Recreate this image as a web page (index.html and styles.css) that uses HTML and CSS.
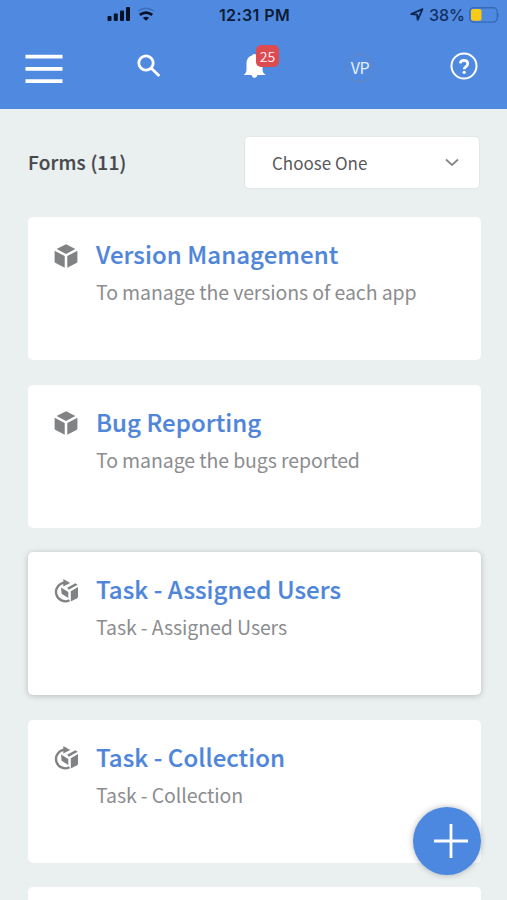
FILE: index.html
```html
<!DOCTYPE html>
<html lang="en">
<head>
<meta charset="utf-8">
<meta name="viewport" content="width=device-width, initial-scale=1">
<title>Forms</title>
<link rel="stylesheet" href="styles.css">
</head>
<body>
<svg class="defs" width="0" height="0">
  <symbol id="cube" viewBox="0 0 24 24">
    <path d="M12 .3 21.400 5 12 9.900 2.600 5z"/>
    <path d="M.6 6.700 10.700 12v11.700L1.600 19Q.6 18.500.6 17.500z"/>
    <path d="M23.400 6.700 13.300 12v11.700L22.400 19q1-.5 1-1.500z"/>
  </symbol>
  <symbol id="task" viewBox="0 0 24 24">
    <path class="arc" d="M11 3.700A9.300 9.300 0 1 0 15.500 21.300"/>
    <path d="M9.300 0 16.200 4 9.300 7.500z"/>
    <path d="M13.200 8.800 21.300 4.200 23.700 5.800 14.800 10.800z"/>
    <path d="M7 8.500 14.300 13v6L7.600 14.800z"/>
    <path d="M24 8 16.800 12.300V22.400l6.200-3.200q1-.6 1-1.700z"/>
  </symbol>
</svg>
<header class="header">
  <div class="status">
    <div class="signal">
      <svg width="24" height="15" viewBox="0 0 24 15"><rect x=".5" y="9" width="4" height="5" rx="1"/><rect x="6.800" y="6.500" width="4" height="7.500" rx="1"/><rect x="13" y="3.500" width="4" height="10.500" rx="1"/><rect x="19" y="0" width="4" height="14" rx="1"/></svg>
      <svg width="18" height="14" viewBox="0 0 18 14"><path class="wifi-dim" d="M1 4Q9-1.500 17 4"/><path class="wifi" d="M2.800 7.900Q9 3.400 15.200 7.900"/><path d="M5.800 10.800Q9 8.600 12.200 10.800L9 13.800z"/></svg>
    </div>
    <time class="clock">12:31 PM</time>
    <div class="power">
      <svg class="location" width="14" height="13" viewBox="0 0 14 13"><path d="M1.200 6 12.500 1.200 7.700 11.800 7 6.600z"/></svg>
      <span class="percent">38%</span>
      <svg width="31" height="16" viewBox="0 0 31 16"><rect class="cell" x=".7" y=".7" width="27.600" height="14.400" rx="4"/><rect class="charge" x="2" y="2" width="10.500" height="11.800" rx="2"/><path class="tip" d="M29.400 5.500q1.600 2.500 0 5z"/></svg>
    </div>
  </div>
  <nav class="toolbar">
    <button class="tool menu" aria-label="Menu"><svg width="38" height="30" viewBox="0 0 38 30"><path d="M.5 2.600h37M.5 14.900h37M.5 27.200h37"/></svg></button>
    <button class="tool search" aria-label="Search"><svg width="24" height="24" viewBox="0 0 24 24"><circle cx="9" cy="9" r="7.200"/><path d="m14.300 14.300 8 7.700"/></svg></button>
    <button class="tool bell" aria-label="Notifications"><svg width="24" height="25" viewBox="0 0 24 25"><path d="M11 0Q13.500 0 14 1.500 19.500 3 19.500 9.500v6q0 3.500 3.500 5.500H14.500Q13.700 24 11.500 24T8.500 21H.5Q3.500 19 3.500 15.500v-6Q3.500 3 9 1.500 9.300 0 11 0z"/></svg><span class="badge">25</span></button>
    <button class="tool avatar">VP</button>
    <button class="tool help" aria-label="Help"><svg width="28" height="28" viewBox="0 0 28 28"><circle cx="14" cy="14" r="12.500"/><path class="mark" d="M10.300 11.300Q10.500 8.300 14 8.300t3.800 3.200q0 1.900-1.900 3.100-1.700 1-1.700 2.600"/><circle class="dot" cx="14.200" cy="20.300" r="1.600"/></svg></button>
  </nav>
</header>
<main class="content">
  <div class="filter">
    <h1 class="heading">Forms (11)</h1>
    <button class="select"><span>Choose One</span><svg width="14" height="9" viewBox="0 0 14 9"><path d="m1 1.500 6 5.500 6-5.500"/></svg></button>
  </div>
  <section class="cards">
    <article class="card"><svg class="icon"><use href="#cube"/></svg><div><h2 class="title">Version Management</h2><p class="desc">To manage the versions of each app</p></div></article>
    <article class="card"><svg class="icon"><use href="#cube"/></svg><div><h2 class="title">Bug Reporting</h2><p class="desc">To manage the bugs reported</p></div></article>
    <article class="card raised"><svg class="icon"><use href="#task"/></svg><div><h2 class="title">Task - Assigned Users</h2><p class="desc">Task - Assigned Users</p></div></article>
    <article class="card"><svg class="icon"><use href="#task"/></svg><div><h2 class="title">Task - Collection</h2><p class="desc">Task - Collection</p></div></article>
    <article class="card partial"></article>
  </section>
</main>
<button class="fab" aria-label="Add"><svg width="34" height="34" viewBox="0 0 34 34"><path d="M17 0v34M0 17h34"/></svg></button>
</body>
</html>
```
FILE: styles.css
```css
* { box-sizing: border-box; }
html, body { height: 100%; }
body {
  margin: 0;
  overflow: hidden;
  background: #eaeff0;
  font-family: "Noto Sans CJK SC", "Noto Sans", sans-serif;
}
button { margin: 0; padding: 0; border: 0; background: none; font: inherit; }
svg { display: block; flex: none; }
.defs { position: absolute; }

.header { height: 108.500px; background: #5089e0; }
.status {
  display: grid;
  grid-template-columns: 180px 1fr 180px;
  align-items: center;
  height: 29px;
  color: #0c1c36;
  fill: #071226;
  font: 600 16px/20px Inter, sans-serif;
}
.signal { display: flex; gap: 6px; padding-left: 107px; }
.wifi { fill: none; stroke: #071226; stroke-width: 2.800; }
.wifi-dim { fill: none; stroke: #3d6db8; stroke-width: 1.300; }
.clock { text-align: center; padding-left: 2px; letter-spacing: 0.400px; }
.power { display: flex; align-items: center; justify-content: flex-end; padding-right: 7px; }
.location { margin-right: 5px; fill: none; stroke: #0c2850; stroke-width: 1.800; stroke-linejoin: round; }
.percent { margin-right: 4px; color: #12305f; font-weight: 500; }
.cell { fill: none; stroke: #356ab8; stroke-width: 1.400; }
.charge { fill: #f8c915; }
.tip { fill: #356ab8; }

.toolbar { display: flex; height: 79.500px; color: #fff; }
.tool { display: flex; flex: none; align-items: flex-start; }
.tool svg { fill: none; stroke: #fff; }
.menu { width: 112px; padding: 25px 0 0 25px; }
.menu svg { stroke-width: 3.800; }
.search { width: 131px; padding: 25px 0 0 25px; }
.search svg { stroke-width: 2.800; }
.bell { position: relative; width: 103px; padding: 25px 0 0 0; }
.bell svg { fill: #fff; stroke: none; }
.badge {
  position: absolute;
  left: 13px;
  top: 16px;
  width: 23px;
  height: 22px;
  border-radius: 5px;
  background: #db4b50;
  color: #ffe5e9;
  font-size: 14px;
  line-height: 22px;
  text-align: center;
}
.avatar {
  width: 28px;
  height: 28px;
  margin-top: 25px;
  border: 1px solid #6785ba;
  border-radius: 50%;
  justify-content: center;
  color: #e5f0ff;
  font-size: 16px;
  line-height: 25px;
  letter-spacing: -0.300px;
}
.help { margin-left: 76px; padding-top: 23px; }
.help svg { stroke-width: 2; }
.help .mark { stroke-width: 2.700; }
.help .dot { fill: #fff; stroke: none; }

.content { padding: 28.500px 26px 0 28px; }
.filter { display: flex; justify-content: space-between; padding-right: 2px; height: 80px; }
.heading {
  margin: 0;
  color: #45494c;
  font-size: 19px;
  font-weight: 500;
  line-height: 50px;
  letter-spacing: 0.200px;
  -webkit-text-stroke: 0.200px;
}
.select {
  display: flex;
  align-items: center;
  justify-content: space-between;
  width: 234px;
  height: 51px;
  padding: 0 20px 0 27px;
  border-radius: 4px;
  background: #fff;
  box-shadow: 0 0 2px rgba(0, 0, 0, 0.120);
  color: #58595b;
  font-size: 17px;
}
.select svg { fill: none; stroke: #85888b; stroke-width: 1.800; }

.cards { display: grid; gap: 24.500px; }
.card {
  display: flex;
  gap: 18px;
  height: 143px;
  padding: 22px 26px;
  border-radius: 5px;
  background: #fff;
}
.partial { height: 13px; padding: 0; border-radius: 5px 5px 0 0; }
.raised { box-shadow: 0 1px 6px rgba(0, 0, 0, 0.220); }
.icon { width: 24px; height: 24px; margin-top: 4.500px; fill: #808284; }
.arc { fill: none; stroke: #808284; stroke-width: 2.400; }
.title {
  margin: 0;
  color: #4f86d9;
  font-size: 24px;
  font-weight: 500;
  line-height: 30px;
  letter-spacing: 0.080px;
  white-space: nowrap;
  -webkit-text-stroke: 0.200px;
}
.desc {
  margin: 8px 0 0;
  color: #8c8d8f;
  font-size: 19.500px;
  line-height: 30px;
  letter-spacing: -0.100px;
  white-space: nowrap;
}

.fab {
  position: fixed;
  left: 413px;
  top: 807px;
  display: flex;
  align-items: center;
  justify-content: center;
  width: 68px;
  height: 68px;
  padding-left: 8px;
  border-radius: 50%;
  background: #4c88e0;
  box-shadow: 0 0 6px rgba(0, 0, 0, 0.280);
}
.fab svg { stroke: #fff; stroke-width: 2.800; }
```
